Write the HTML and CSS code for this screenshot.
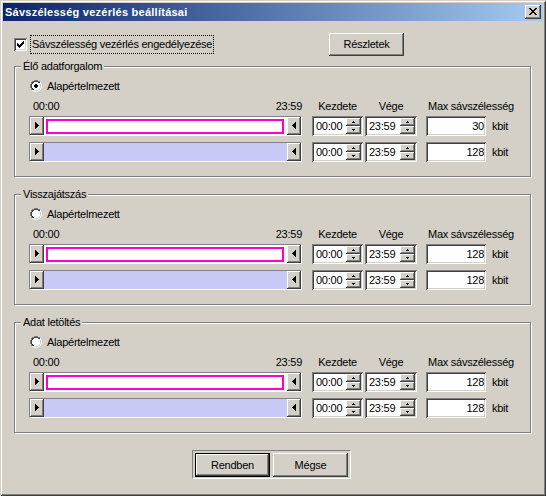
FILE: index.html
```html
<!DOCTYPE html>
<html lang="hu">
<head>
<meta charset="utf-8">
<title>Sávszélesség vezérlés beállításai</title>
<link rel="stylesheet" href="styles.css">
</head>
<body>
<div class="window">
  <div class="titlebar">
    <span class="title">Sávszélesség vezérlés beállításai</span>
    <div class="close"><svg width="8" height="7" viewBox="0 0 8 7" shape-rendering="crispEdges"><path d="M0 0h2v1H0z M6 0h2v1H6z M1 1h2v1H1z M5 1h2v1H5z M2 2h4v1H2z M3 3h2v1H3z M2 4h4v1H2z M1 5h2v1H1z M5 5h2v1H5z M0 6h2v1H0z M6 6h2v1H6z"/></svg></div>
  </div>
  <div class="client">
    <div class="toprow">
      <div class="checkwrap">
        <span class="checkbox"><svg width="7" height="7" viewBox="0 0 7 7" shape-rendering="crispEdges"><path d="M0 2h1v3H0z M1 3h1v3H1z M2 4h1v3H2z M3 3h1v3H3z M4 2h1v3H4z M5 1h1v3H5z M6 0h1v3H6z"/></svg></span>
        <span class="focus">Sávszélesség vezérlés engedélyezése</span>
      </div>
      <div class="btn details">Részletek</div>
    </div>

    <section class="group">
      <span class="legend">Élő adatforgalom</span>
      <div class="radio-row">
        <svg class="radio" width="12" height="12" viewBox="0 0 12 12" shape-rendering="crispEdges"><path fill="#808080" d="M4 0h4v1H4z M2 1h2v1H2z M8 1h2v1H8z M1 2h1v2H1z M0 4h1v4H0z M1 8h1v2H1z"/><path fill="#fff" d="M10 2h1v2h-1z M11 4h1v4h-1z M10 8h1v2h-1z M2 10h2v1H2z M8 10h2v1H8z M4 11h4v1H4z M4 2h4v1H4z M3 3h6v1H3z M2 4h8v4H2z M3 8h6v1H3z M4 9h4v1H4z"/><path fill="#404040" d="M4 1h4v1H4z M2 2h2v1H2z M8 2h2v1H8z M2 3h1v1H2z M1 4h1v4H1z M2 8h1v1H2z M2 9h2v1H2z"/><path fill="#D4D0C8" d="M9 3h1v1H9z M10 4h1v4h-1z M9 8h1v1H9z M8 9h2v1H8z M4 10h4v1H4z"/><path fill="#000" d="M5 4h2v1H5z M4 5h4v2H4z M5 7h2v1H5z"/></svg>
        <span class="radio-label">Alapértelmezett</span>
      </div>
      <div class="hdr">
        <div class="h-range"><span>00:00</span><span>23:59</span></div>
        <div class="h-kezd">Kezdete</div>
        <div class="h-vege">Vége</div>
        <div class="h-max">Max sávszélesség</div>
      </div>
      <div class="row row1">
        <div class="slider"><div class="abtn"><svg width="4" height="7" viewBox="0 0 4 7" shape-rendering="crispEdges"><path d="M0 0h1v7H0z M1 1h1v5H1z M2 2h1v3H2z M3 3h1v1H3z"/></svg></div><div class="track white"><div class="pink"></div></div><div class="abtn"><svg width="4" height="7" viewBox="0 0 4 7" shape-rendering="crispEdges"><path d="M3 0h1v7H3z M2 1h1v5H2z M1 2h1v3H1z M0 3h1v1H0z"/></svg></div></div>
        <div class="spin s1"><span class="val">00:00</span><span class="btns"><span class="sbtn"><svg width="3" height="2" viewBox="0 0 3 2" shape-rendering="crispEdges"><path d="M1 0h1v1H1z M0 1h3v1H0z"/></svg></span><span class="sbtn"><svg width="3" height="2" viewBox="0 0 3 2" shape-rendering="crispEdges"><path d="M0 0h3v1H0z M1 1h1v1H1z"/></svg></span></span></div>
        <div class="spin s2"><span class="val">23:59</span><span class="btns"><span class="sbtn"><svg width="3" height="2" viewBox="0 0 3 2" shape-rendering="crispEdges"><path d="M1 0h1v1H1z M0 1h3v1H0z"/></svg></span><span class="sbtn"><svg width="3" height="2" viewBox="0 0 3 2" shape-rendering="crispEdges"><path d="M0 0h3v1H0z M1 1h1v1H1z"/></svg></span></span></div>
        <div class="num">30</div>
        <span class="unit">kbit</span>
      </div>
      <div class="row row2">
        <div class="slider"><div class="abtn"><svg width="4" height="7" viewBox="0 0 4 7" shape-rendering="crispEdges"><path d="M0 0h1v7H0z M1 1h1v5H1z M2 2h1v3H2z M3 3h1v1H3z"/></svg></div><div class="track lav"></div><div class="abtn"><svg width="4" height="7" viewBox="0 0 4 7" shape-rendering="crispEdges"><path d="M3 0h1v7H3z M2 1h1v5H2z M1 2h1v3H1z M0 3h1v1H0z"/></svg></div></div>
        <div class="spin s1"><span class="val">00:00</span><span class="btns"><span class="sbtn"><svg width="3" height="2" viewBox="0 0 3 2" shape-rendering="crispEdges"><path d="M1 0h1v1H1z M0 1h3v1H0z"/></svg></span><span class="sbtn"><svg width="3" height="2" viewBox="0 0 3 2" shape-rendering="crispEdges"><path d="M0 0h3v1H0z M1 1h1v1H1z"/></svg></span></span></div>
        <div class="spin s2"><span class="val">23:59</span><span class="btns"><span class="sbtn"><svg width="3" height="2" viewBox="0 0 3 2" shape-rendering="crispEdges"><path d="M1 0h1v1H1z M0 1h3v1H0z"/></svg></span><span class="sbtn"><svg width="3" height="2" viewBox="0 0 3 2" shape-rendering="crispEdges"><path d="M0 0h3v1H0z M1 1h1v1H1z"/></svg></span></span></div>
        <div class="num">128</div>
        <span class="unit">kbit</span>
      </div>
    </section>

    <section class="group">
      <span class="legend">Visszajátszás</span>
      <div class="radio-row">
        <svg class="radio" width="12" height="12" viewBox="0 0 12 12" shape-rendering="crispEdges"><path fill="#808080" d="M4 0h4v1H4z M2 1h2v1H2z M8 1h2v1H8z M1 2h1v2H1z M0 4h1v4H0z M1 8h1v2H1z"/><path fill="#fff" d="M10 2h1v2h-1z M11 4h1v4h-1z M10 8h1v2h-1z M2 10h2v1H2z M8 10h2v1H8z M4 11h4v1H4z M4 2h4v1H4z M3 3h6v1H3z M2 4h8v4H2z M3 8h6v1H3z M4 9h4v1H4z"/><path fill="#404040" d="M4 1h4v1H4z M2 2h2v1H2z M8 2h2v1H8z M2 3h1v1H2z M1 4h1v4H1z M2 8h1v1H2z M2 9h2v1H2z"/><path fill="#D4D0C8" d="M9 3h1v1H9z M10 4h1v4h-1z M9 8h1v1H9z M8 9h2v1H8z M4 10h4v1H4z"/></svg>
        <span class="radio-label">Alapértelmezett</span>
      </div>
      <div class="hdr">
        <div class="h-range"><span>00:00</span><span>23:59</span></div>
        <div class="h-kezd">Kezdete</div>
        <div class="h-vege">Vége</div>
        <div class="h-max">Max sávszélesség</div>
      </div>
      <div class="row row1">
        <div class="slider"><div class="abtn"><svg width="4" height="7" viewBox="0 0 4 7" shape-rendering="crispEdges"><path d="M0 0h1v7H0z M1 1h1v5H1z M2 2h1v3H2z M3 3h1v1H3z"/></svg></div><div class="track white"><div class="pink"></div></div><div class="abtn"><svg width="4" height="7" viewBox="0 0 4 7" shape-rendering="crispEdges"><path d="M3 0h1v7H3z M2 1h1v5H2z M1 2h1v3H1z M0 3h1v1H0z"/></svg></div></div>
        <div class="spin s1"><span class="val">00:00</span><span class="btns"><span class="sbtn"><svg width="3" height="2" viewBox="0 0 3 2" shape-rendering="crispEdges"><path d="M1 0h1v1H1z M0 1h3v1H0z"/></svg></span><span class="sbtn"><svg width="3" height="2" viewBox="0 0 3 2" shape-rendering="crispEdges"><path d="M0 0h3v1H0z M1 1h1v1H1z"/></svg></span></span></div>
        <div class="spin s2"><span class="val">23:59</span><span class="btns"><span class="sbtn"><svg width="3" height="2" viewBox="0 0 3 2" shape-rendering="crispEdges"><path d="M1 0h1v1H1z M0 1h3v1H0z"/></svg></span><span class="sbtn"><svg width="3" height="2" viewBox="0 0 3 2" shape-rendering="crispEdges"><path d="M0 0h3v1H0z M1 1h1v1H1z"/></svg></span></span></div>
        <div class="num">128</div>
        <span class="unit">kbit</span>
      </div>
      <div class="row row2">
        <div class="slider"><div class="abtn"><svg width="4" height="7" viewBox="0 0 4 7" shape-rendering="crispEdges"><path d="M0 0h1v7H0z M1 1h1v5H1z M2 2h1v3H2z M3 3h1v1H3z"/></svg></div><div class="track lav"></div><div class="abtn"><svg width="4" height="7" viewBox="0 0 4 7" shape-rendering="crispEdges"><path d="M3 0h1v7H3z M2 1h1v5H2z M1 2h1v3H1z M0 3h1v1H0z"/></svg></div></div>
        <div class="spin s1"><span class="val">00:00</span><span class="btns"><span class="sbtn"><svg width="3" height="2" viewBox="0 0 3 2" shape-rendering="crispEdges"><path d="M1 0h1v1H1z M0 1h3v1H0z"/></svg></span><span class="sbtn"><svg width="3" height="2" viewBox="0 0 3 2" shape-rendering="crispEdges"><path d="M0 0h3v1H0z M1 1h1v1H1z"/></svg></span></span></div>
        <div class="spin s2"><span class="val">23:59</span><span class="btns"><span class="sbtn"><svg width="3" height="2" viewBox="0 0 3 2" shape-rendering="crispEdges"><path d="M1 0h1v1H1z M0 1h3v1H0z"/></svg></span><span class="sbtn"><svg width="3" height="2" viewBox="0 0 3 2" shape-rendering="crispEdges"><path d="M0 0h3v1H0z M1 1h1v1H1z"/></svg></span></span></div>
        <div class="num">128</div>
        <span class="unit">kbit</span>
      </div>
    </section>

    <section class="group">
      <span class="legend">Adat letöltés</span>
      <div class="radio-row">
        <svg class="radio" width="12" height="12" viewBox="0 0 12 12" shape-rendering="crispEdges"><path fill="#808080" d="M4 0h4v1H4z M2 1h2v1H2z M8 1h2v1H8z M1 2h1v2H1z M0 4h1v4H0z M1 8h1v2H1z"/><path fill="#fff" d="M10 2h1v2h-1z M11 4h1v4h-1z M10 8h1v2h-1z M2 10h2v1H2z M8 10h2v1H8z M4 11h4v1H4z M4 2h4v1H4z M3 3h6v1H3z M2 4h8v4H2z M3 8h6v1H3z M4 9h4v1H4z"/><path fill="#404040" d="M4 1h4v1H4z M2 2h2v1H2z M8 2h2v1H8z M2 3h1v1H2z M1 4h1v4H1z M2 8h1v1H2z M2 9h2v1H2z"/><path fill="#D4D0C8" d="M9 3h1v1H9z M10 4h1v4h-1z M9 8h1v1H9z M8 9h2v1H8z M4 10h4v1H4z"/></svg>
        <span class="radio-label">Alapértelmezett</span>
      </div>
      <div class="hdr">
        <div class="h-range"><span>00:00</span><span>23:59</span></div>
        <div class="h-kezd">Kezdete</div>
        <div class="h-vege">Vége</div>
        <div class="h-max">Max sávszélesség</div>
      </div>
      <div class="row row1">
        <div class="slider"><div class="abtn"><svg width="4" height="7" viewBox="0 0 4 7" shape-rendering="crispEdges"><path d="M0 0h1v7H0z M1 1h1v5H1z M2 2h1v3H2z M3 3h1v1H3z"/></svg></div><div class="track white"><div class="pink"></div></div><div class="abtn"><svg width="4" height="7" viewBox="0 0 4 7" shape-rendering="crispEdges"><path d="M3 0h1v7H3z M2 1h1v5H2z M1 2h1v3H1z M0 3h1v1H0z"/></svg></div></div>
        <div class="spin s1"><span class="val">00:00</span><span class="btns"><span class="sbtn"><svg width="3" height="2" viewBox="0 0 3 2" shape-rendering="crispEdges"><path d="M1 0h1v1H1z M0 1h3v1H0z"/></svg></span><span class="sbtn"><svg width="3" height="2" viewBox="0 0 3 2" shape-rendering="crispEdges"><path d="M0 0h3v1H0z M1 1h1v1H1z"/></svg></span></span></div>
        <div class="spin s2"><span class="val">23:59</span><span class="btns"><span class="sbtn"><svg width="3" height="2" viewBox="0 0 3 2" shape-rendering="crispEdges"><path d="M1 0h1v1H1z M0 1h3v1H0z"/></svg></span><span class="sbtn"><svg width="3" height="2" viewBox="0 0 3 2" shape-rendering="crispEdges"><path d="M0 0h3v1H0z M1 1h1v1H1z"/></svg></span></span></div>
        <div class="num">128</div>
        <span class="unit">kbit</span>
      </div>
      <div class="row row2">
        <div class="slider"><div class="abtn"><svg width="4" height="7" viewBox="0 0 4 7" shape-rendering="crispEdges"><path d="M0 0h1v7H0z M1 1h1v5H1z M2 2h1v3H2z M3 3h1v1H3z"/></svg></div><div class="track lav"></div><div class="abtn"><svg width="4" height="7" viewBox="0 0 4 7" shape-rendering="crispEdges"><path d="M3 0h1v7H3z M2 1h1v5H2z M1 2h1v3H1z M0 3h1v1H0z"/></svg></div></div>
        <div class="spin s1"><span class="val">00:00</span><span class="btns"><span class="sbtn"><svg width="3" height="2" viewBox="0 0 3 2" shape-rendering="crispEdges"><path d="M1 0h1v1H1z M0 1h3v1H0z"/></svg></span><span class="sbtn"><svg width="3" height="2" viewBox="0 0 3 2" shape-rendering="crispEdges"><path d="M0 0h3v1H0z M1 1h1v1H1z"/></svg></span></span></div>
        <div class="spin s2"><span class="val">23:59</span><span class="btns"><span class="sbtn"><svg width="3" height="2" viewBox="0 0 3 2" shape-rendering="crispEdges"><path d="M1 0h1v1H1z M0 1h3v1H0z"/></svg></span><span class="sbtn"><svg width="3" height="2" viewBox="0 0 3 2" shape-rendering="crispEdges"><path d="M0 0h3v1H0z M1 1h1v1H1z"/></svg></span></span></div>
        <div class="num">128</div>
        <span class="unit">kbit</span>
      </div>
    </section>

    <div class="actions">
      <div class="btn default">Rendben</div>
      <div class="btn">Mégse</div>
    </div>
  </div>
</div>
</body>
</html>
```

FILE: styles.css
```css
* { box-sizing: border-box; }
html, body { margin: 0; padding: 0; }
body {
  font-family: "Liberation Sans", Arial, sans-serif;
  font-size: 11px;
  line-height: 13px;
  letter-spacing: -0.25px;
  color: #000;
  background: #D4D0C8;
}
svg { display: block; }

.window {
  width: 546px;
  height: 496px;
  padding: 3px;
  background: #D4D0C8;
  box-shadow: inset 1px 1px #D4D0C8, inset -1px -1px #404040, inset 2px 2px #fff, inset -2px -2px #808080;
  display: flex;
  flex-direction: column;
}

.titlebar {
  flex: none;
  height: 18px;
  display: flex;
  align-items: center;
  padding: 0 2px 0 2px;
  background: linear-gradient(to right, #0A246A, #A6CAF0);
}
.title {
  flex: 1;
  color: #fff;
  font-weight: bold;
  letter-spacing: 0.25px;
  white-space: nowrap;
}
.close {
  width: 16px;
  height: 14px;
  background: #D4D0C8;
  box-shadow: inset -1px -1px #404040, inset 1px 1px #fff, inset -2px -2px #808080;
  display: flex;
  align-items: center;
  justify-content: center;
}
.close svg { margin: -1px 0 0 -1px; }

.client {
  flex: 1;
  padding-top: 12px;
}

.toprow {
  height: 23px;
  display: flex;
  align-items: center;
  padding: 0 139px 0 11px;
}
.checkwrap {
  display: flex;
  align-items: center;
}
.checkbox {
  width: 13px;
  height: 13px;
  background: #fff;
  box-shadow: inset 1px 1px #808080, inset -1px -1px #fff, inset 2px 2px #404040, inset -2px -2px #D4D0C8;
  display: flex;
  align-items: center;
  justify-content: center;
}
.focus {
  margin-left: 3px;
  padding: 2px 1px;
  border: 1px dotted #000;
  white-space: nowrap;
}

.btn {
  width: 75px;
  height: 23px;
  background: #D4D0C8;
  box-shadow: inset -1px -1px #404040, inset 1px 1px #fff, inset -2px -2px #808080;
  display: flex;
  align-items: center;
  justify-content: center;
}
.details { margin-left: auto; }

.group {
  position: relative;
  margin: 10px 0 0 11px;
  width: 517px;
  height: 111px;
  border: 1px solid #808080;
  box-shadow: inset 1px 1px #fff, 1px 1px #fff;
  padding: 12px 0 0 14px;
}
.group + .group { margin-top: 17px; }
.legend {
  position: absolute;
  top: -7px;
  left: 6px;
  padding: 0 2px;
  background: #D4D0C8;
  white-space: nowrap;
}

.radio-row {
  height: 14px;
  display: flex;
  align-items: center;
  margin-left: 1px;
}
.radio-label { margin-left: 5px; }

.hdr {
  margin-top: 7px;
  height: 13px;
  display: flex;
  white-space: nowrap;
}
.h-range {
  width: 273px;
  padding-left: 4px;
  display: flex;
  justify-content: space-between;
}
.h-kezd { width: 51px; margin-left: 10px; text-align: center; }
.h-vege { width: 52px; margin-left: 2px; text-align: center; }
.h-max { margin-left: 11px; }

.row {
  height: 20px;
  display: flex;
  align-items: center;
}
.row1 { margin-top: 3px; }
.row2 { margin-top: 6px; }

.slider {
  width: 273px;
  height: 20px;
  display: flex;
  border-style: solid;
  border-width: 1px;
  border-color: #808080 #fff #fff #808080;
}
.abtn {
  width: 14px;
  height: 18px;
  flex: none;
  background: #D4D0C8;
  box-shadow: inset -1px -1px #404040, inset 1px 1px #fff, inset -2px -2px #808080;
  display: flex;
  align-items: center;
  justify-content: center;
}
.abtn svg { margin-top: -1px; }
.track { flex: 1; height: 18px; }
.track.white { background: #fff; padding: 2px 3px 1px 2px; }
.track.lav { background: #C9C9F8; }
.pink {
  height: 100%;
  border: 2px solid #FF00CC;
}

.spin {
  height: 20px;
  display: flex;
  background: #fff;
  padding: 2px;
  box-shadow: inset 1px 1px #808080, inset -1px -1px #fff, inset 2px 2px #404040, inset -2px -2px #D4D0C8;
}
.spin.s1 { width: 51px; margin-left: 10px; }
.spin.s2 { width: 52px; margin-left: 2px; }
.val {
  flex: 1;
  padding-left: 2px;
  line-height: 16px;
}
.btns {
  width: 15px;
  display: flex;
  flex-direction: column;
}
.sbtn {
  height: 8px;
  background: #D4D0C8;
  box-shadow: inset -1px -1px #404040, inset 1px 1px #fff, inset -2px -2px #808080;
  display: flex;
  align-items: center;
  justify-content: center;
}

.num {
  width: 60px;
  height: 20px;
  margin-left: 9px;
  padding: 2px 2px 2px 2px;
  background: #fff;
  text-align: right;
  line-height: 16px;
  box-shadow: inset 1px 1px #808080, inset -1px -1px #fff, inset 2px 2px #404040, inset -2px -2px #D4D0C8;
}
.unit { margin-left: 6px; }

.actions {
  margin: 17px 0 0 189px;
  width: max-content;
  display: flex;
  gap: 3px;
  padding: 2px 2px 1px 2px;
  border-style: solid;
  border-width: 1px;
  border-color: #808080 #fff #fff #808080;
}
.actions .btn { height: 24px; }
.btn.default {
  border: 1px solid #000;
}
```
